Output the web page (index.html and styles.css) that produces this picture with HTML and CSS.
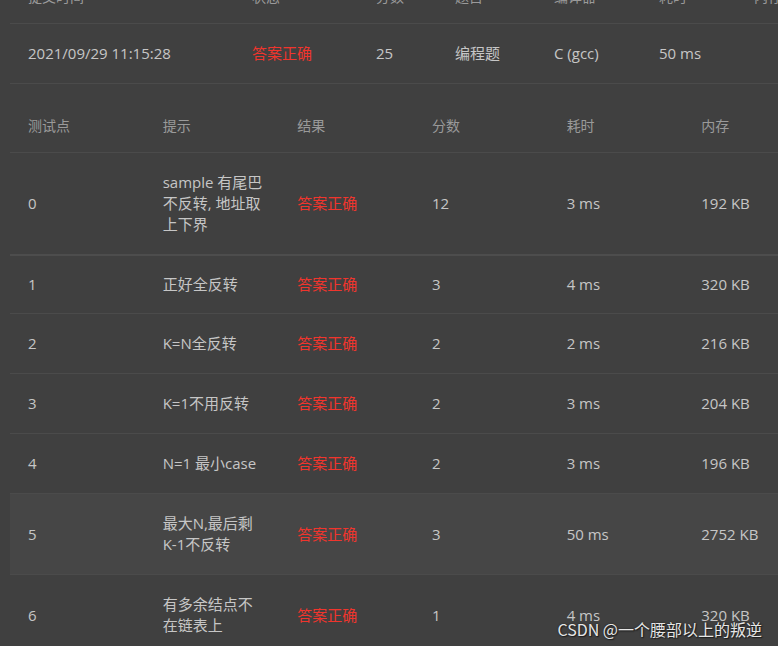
FILE: index.html
```html
<!DOCTYPE html>
<html lang="zh">
<head>
<meta charset="utf-8">
<title>提交详情</title>
<link rel="stylesheet" href="styles.css">
</head>
<body>
<div class="page">
  <table class="tbl summary">
    <colgroup>
      <col class="c1"><col class="c2"><col class="c3"><col class="c4"><col class="c5"><col class="c6"><col class="c7">
    </colgroup>
    <thead>
      <tr><th>提交时间</th><th>状态</th><th>分数</th><th>题目</th><th>编译器</th><th>耗时</th><th>内存</th></tr>
    </thead>
    <tbody>
      <tr><td>2021/09/29 11:15:28</td><td class="ok">答案正确</td><td>25</td><td>编程题</td><td>C (gcc)</td><td>50 ms</td><td></td></tr>
    </tbody>
  </table>

  <table class="tbl cases">
    <colgroup>
      <col class="cc"><col class="cc"><col class="cc"><col class="cc"><col class="cc"><col class="cc">
    </colgroup>
    <thead>
      <tr><th>测试点</th><th>提示</th><th>结果</th><th>分数</th><th>耗时</th><th>内存</th></tr>
    </thead>
    <tbody>
      <tr class="first"><td>0</td><td>sample 有尾巴<br>不反转, 地址取<br>上下界</td><td class="ok">答案正确</td><td>12</td><td>3 ms</td><td>192 KB</td></tr>
      <tr class="second"><td>1</td><td>正好全反转</td><td class="ok">答案正确</td><td>3</td><td>4 ms</td><td>320 KB</td></tr>
      <tr><td>2</td><td>K=N全反转</td><td class="ok">答案正确</td><td>2</td><td>2 ms</td><td>216 KB</td></tr>
      <tr><td>3</td><td>K=1不用反转</td><td class="ok">答案正确</td><td>2</td><td>3 ms</td><td>204 KB</td></tr>
      <tr><td>4</td><td>N=1 最小case</td><td class="ok">答案正确</td><td>2</td><td>3 ms</td><td>196 KB</td></tr>
      <tr class="hover"><td>5</td><td>最大N,最后剩<br>K-1不反转</td><td class="ok">答案正确</td><td>3</td><td>50 ms</td><td>2752 KB</td></tr>
      <tr><td>6</td><td>有多余结点不<br>在链表上</td><td class="ok">答案正确</td><td>1</td><td>4 ms</td><td>320 KB</td></tr>
    </tbody>
  </table>
</div>
<div class="watermark">CSDN @一个腰部以上的叛逆</div>
</body>
</html>
```

FILE: styles.css
```css
html, body {
  margin: 0;
  padding: 0;
  background: #404040;
  overflow: hidden;
  width: 778px;
  height: 646px;
}

body {
  position: relative;
  font-family: "Open Sans", "Noto Sans CJK SC", sans-serif;
  font-size: 15px;
  color: #c6c6c6;
}

.page {
  margin-top: -35px;
  padding-left: 10px;
  display: flex;
  flex-direction: column;
  align-items: flex-start;
  gap: 10px;
}

.tbl {
  border-collapse: collapse;
  table-layout: fixed;
  flex: none;
}

.tbl th,
.tbl td {
  text-align: left;
  vertical-align: middle;
  white-space: nowrap;
  padding: 19px 18px;
  line-height: 21px;
  border-bottom: 1px solid #4b4b4b;
  overflow: hidden;
}

.tbl th {
  font-weight: normal;
  font-size: 14px;
  color: #9a9a9a;
  padding-top: 21px;
  padding-bottom: 16px;
}

.summary {
  width: 830px;
}

.summary .c1 { width: 224px; }
.summary .c2 { width: 124px; }
.summary .c3 { width: 79px; }
.summary .c4 { width: 99px; }
.summary .c5 { width: 105px; }
.summary .c6 { width: 95px; }
.summary .c7 { width: 104px; }

.cases {
  width: 808px;
}

.cases .cc {
  width: 134.67px;
}

.cases tr.first td {
  border-bottom: 2px solid #4d4d4d;
}

.cases tr.second td {
  padding-top: 18px;
  padding-bottom: 18px;
}

.cases tr.hover td {
  background: #464646;
}

.ok {
  color: #f0352d;
}

.watermark {
  position: absolute;
  right: 16px;
  bottom: 5px;
  font-family: "Noto Sans CJK SC", sans-serif;
  font-size: 16px;
  color: #e6e6e6;
  text-shadow: 0 0 2px #1e1e1e, 1px 1px 1px #1e1e1e;
}
```
